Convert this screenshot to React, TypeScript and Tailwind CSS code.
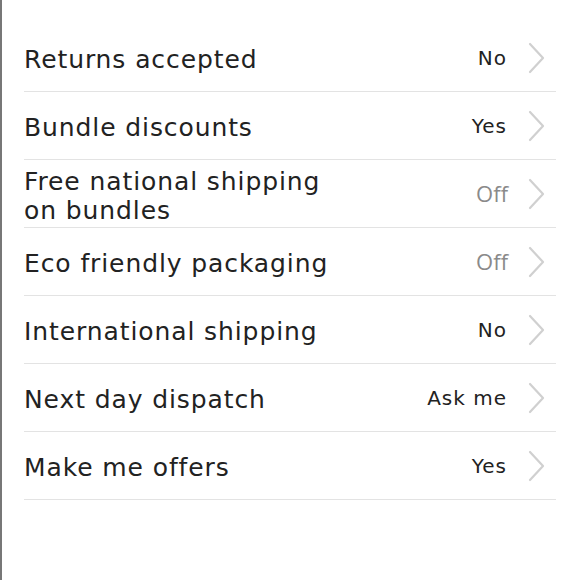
import React from "react";

type Row = { label: string[]; value: string; muted?: boolean };

const rows: Row[] = [
  { label: ["Returns accepted"], value: "No" },
  { label: ["Bundle discounts"], value: "Yes" },
  { label: ["Free national shipping", "on bundles"], value: "Off", muted: true },
  { label: ["Eco friendly packaging"], value: "Off", muted: true },
  { label: ["International shipping"], value: "No" },
  { label: ["Next day dispatch"], value: "Ask me" },
  { label: ["Make me offers"], value: "Yes" },
];

function Chevron() {
  return (
    <svg width="18" height="32" viewBox="0 0 18 32" fill="none" className="shrink-0">
      <path d="M2 2 L15 16 L2 30" stroke="#d0d0d0" strokeWidth="2.2" strokeLinecap="round" strokeLinejoin="round" />
    </svg>
  );
}

export default function App() {
  return (
    <div className="w-[580px] h-[580px] bg-white border-l-2 border-[#777] pt-6 pl-[22px] pr-6 font-['DejaVu_Sans',sans-serif] text-[#222]">
      {rows.map((r, i) => (
        <div key={i} className="h-[68px] flex items-center border-b border-[#e3e3e3]">
          <div className="flex-1 text-[25px] leading-[29px] tracking-[0.9px] pt-1">
            {r.label.map((l, j) => (
              <div key={j}>{l}</div>
            ))}
          </div>
          <div
            className={
              r.muted
                ? "text-[22px] text-[#8a8a8a] font-['Open_Sans',sans-serif] mr-[20px]"
                : "text-[20px] tracking-[1px] mr-[21px]"
            }
          >
            {r.value}
          </div>
          <div className="mr-[10px]">
            <Chevron />
          </div>
        </div>
      ))}
    </div>
  );
}
